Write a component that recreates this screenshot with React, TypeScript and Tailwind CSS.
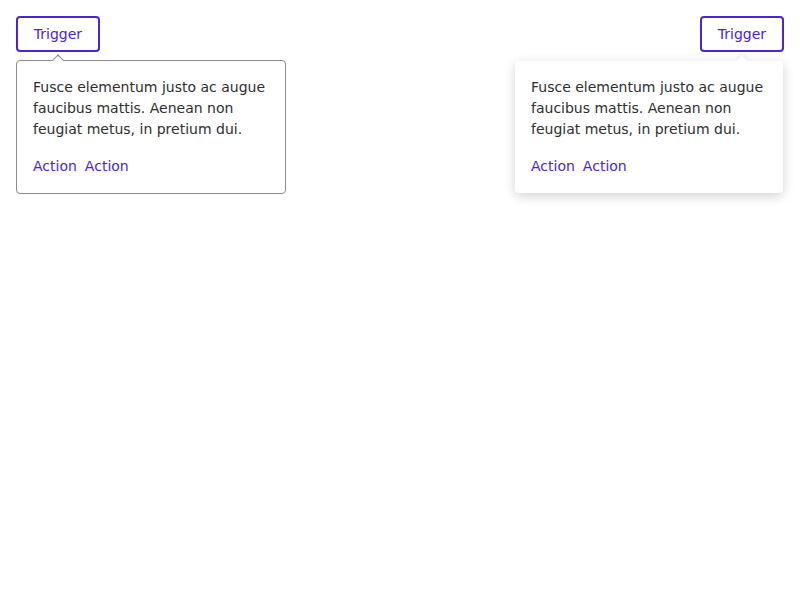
import React from "react";

const text = "Fusce elementum justo ac augue faucibus mattis. Aenean non feugiat metus, in pretium dui.";

function Trigger() {
  return (
    <button className="h-9 w-[84px] rounded border-2 border-[#4b24d6] bg-white text-sm text-[#4b24d6]">
      Trigger
    </button>
  );
}

function Content() {
  return (
    <>
      <p className="text-sm leading-[21px] text-[#2e2e2e]">{text}</p>
      <div className="mt-4 flex gap-2 text-sm leading-[21px] text-[#4b24d6]">
        <span>Action</span>
        <span>Action</span>
      </div>
    </>
  );
}

export default function App() {
  return (
    <div className="h-[600px] w-[800px] bg-white p-4 font-['DejaVu_Sans',sans-serif]">
      <div className="flex justify-between">
        <div className="flex flex-col items-start">
          <Trigger />
          <div className="relative mt-2 w-[270px] rounded border border-[#8c8c8c] bg-white p-4">
            <div className="absolute -top-[5px] left-[37px] h-2 w-2 rotate-45 border-l border-t border-[#8c8c8c] bg-white" />
            <Content />
          </div>
        </div>
        <div className="flex flex-col items-end">
          <Trigger />
          <div className="relative mr-px mt-[9px] w-[268px] rounded bg-white p-4 shadow-[0_3px_12px_rgba(0,0,0,0.18)]">
            <div className="absolute -top-[4px] right-[37px] h-2 w-2 rotate-45 bg-white shadow-[-2px_-2px_4px_rgba(0,0,0,0.06)]" />
            <Content />
          </div>
        </div>
      </div>
    </div>
  );
}
